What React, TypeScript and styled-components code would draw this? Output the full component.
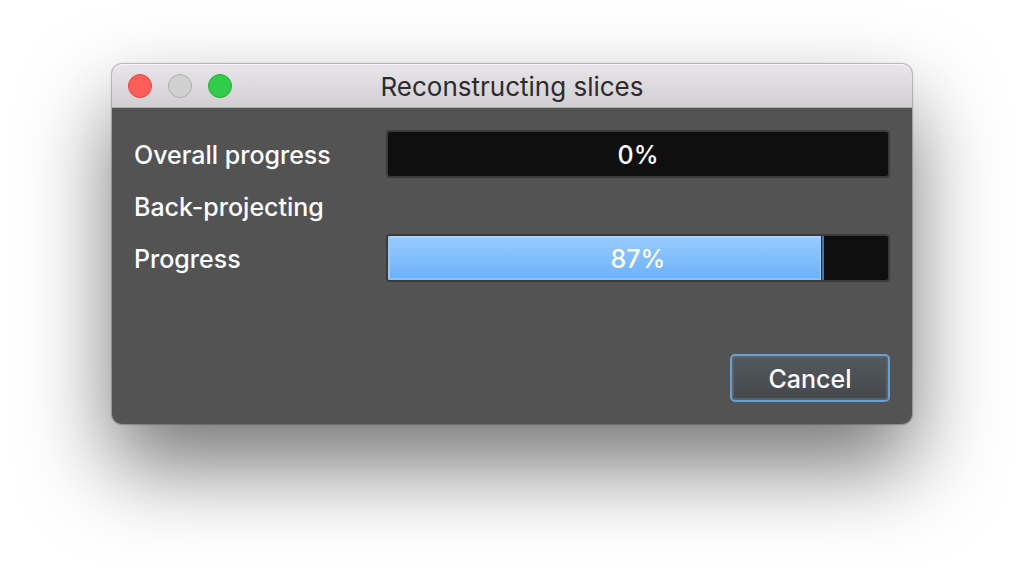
import React from "react";
import styled, { createGlobalStyle } from "styled-components";

const GlobalStyle = createGlobalStyle`
  *, *::before, *::after { box-sizing: border-box; }
  body {
    margin: 0;
    background: #fff;
    font-family: Inter, "Liberation Sans", sans-serif;
    font-size: 25px;
    font-weight: 500;
  }
`;

const Page = styled.main`
  padding: 64px 112px 159px;
`;

const Dialog = styled.section`
  border-radius: 10px;
  background: #535353;
  box-shadow: 0 0 1px 1px rgba(0, 0, 0, 0.25), 0 42px 86px rgba(0, 0, 0, 0.54);
`;

const TitleBar = styled.header`
  display: grid;
  grid-template-columns: 1fr auto 1fr;
  align-items: center;
  height: 44px;
  padding: 0 16px;
  border-radius: 10px 10px 0 0;
  border-bottom: 1px solid #aeacae;
  background: linear-gradient(#e9e6e9, #d2cfd2);
  box-shadow: inset 0 1px 0 #f6f4f6;
`;

const WindowControls = styled.div`
  display: flex;
  gap: 16px;
`;

const Light = styled.button<{ $fill: string; $edge: string }>`
  width: 24px;
  height: 24px;
  padding: 0;
  border: 1px solid ${(p) => p.$edge};
  border-radius: 50%;
  background: ${(p) => p.$fill};
`;

const Title = styled.h1`
  margin: 0;
  padding-top: 2px;
  font-size: 26px;
  font-weight: 400;
  line-height: 32px;
  color: #2e2b2e;
`;

const Content = styled.div`
  padding: 22px;
`;

const Rows = styled.div`
  display: grid;
  grid-template-columns: 248px 1fr;
  gap: 4px;
  align-items: center;
`;

const Label = styled.span`
  padding-top: 2px;
  line-height: 46px;
  color: #fff;
`;

const Bar = styled.div`
  display: grid;
  height: 48px;
  border: 2px solid #3b3b3b;
  border-radius: 4px;
  background: #0f0f0f;
  overflow: hidden;
`;

const Fill = styled.div`
  grid-area: 1 / 1;
  background: linear-gradient(#99ccff, #6bb0f8);
  box-shadow: 1px 0 #4179b0, inset -1px 0 #4179b0, inset -2px 0 #1b2f45,
    inset -3px 0 #a0cfff, inset 2px 0 #93c8ff, inset 0 2px #a6d3ff,
    inset 0 -2px #86c1ff;
`;

const Value = styled.span`
  grid-area: 1 / 1;
  padding-top: 2px;
  line-height: 42px;
  text-align: center;
  color: #fff;
`;

const Actions = styled.footer`
  display: flex;
  justify-content: flex-end;
  padding-top: 72px;
`;

const Button = styled.button`
  width: 160px;
  height: 48px;
  padding: 2px 0 0;
  border: 2px solid #6a9fd4;
  border-radius: 5px;
  background: linear-gradient(#54595f, #44484b);
  box-shadow: inset 0 0 0 2px #5d6166;
  color: #fff;
  font: inherit;
  line-height: 40px;
`;

function ProgressBar({ label, value }: { label: string; value: number }) {
  return (
    <Bar role="progressbar" aria-label={label} aria-valuenow={value} aria-valuemin={0} aria-valuemax={100}>
      {value > 0 && <Fill style={{ width: `${value}%` }} />}
      <Value>{value}%</Value>
    </Bar>
  );
}

export default function App() {
  return (
    <Page>
      <GlobalStyle />
      <Dialog role="dialog" aria-labelledby="title">
        <TitleBar>
          <WindowControls>
            <Light aria-label="Close" $fill="#fe5f58" $edge="#e2463f" />
            <Light aria-label="Minimize" disabled $fill="#d1d0d1" $edge="#b0aeb0" />
            <Light aria-label="Zoom" $fill="#33cb4a" $edge="#1fad30" />
          </WindowControls>
          <Title id="title">Reconstructing slices</Title>
        </TitleBar>
        <Content>
          <Rows>
            <Label>Overall progress</Label>
            <ProgressBar label="Overall progress" value={0} />
            <Label>Back-projecting</Label>
            <span />
            <Label>Progress</Label>
            <ProgressBar label="Progress" value={87} />
          </Rows>
          <Actions>
            <Button>Cancel</Button>
          </Actions>
        </Content>
      </Dialog>
    </Page>
  );
}
